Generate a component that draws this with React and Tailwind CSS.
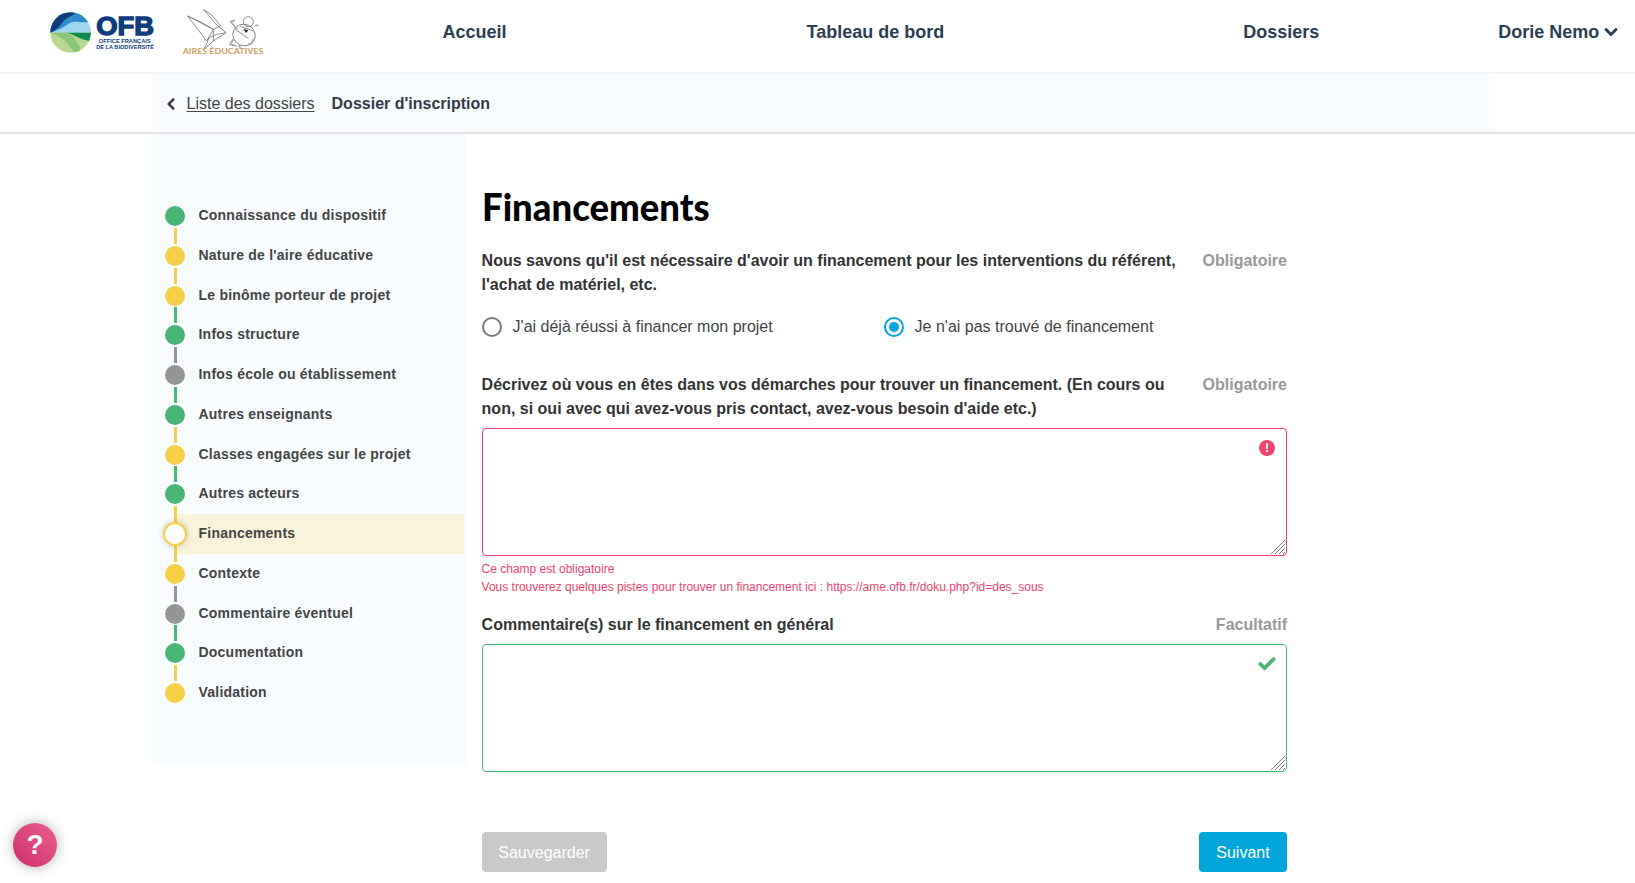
import { ChevronDown, ChevronLeft, Check } from 'lucide-react';

const GREEN = '#4bb575';
const YELLOW = '#f5cf44';
const GREY = '#959595';

const STEPS = [
  { label: 'Connaissance du dispositif', color: GREEN },
  { label: "Nature de l'aire éducative", color: YELLOW },
  { label: 'Le binôme porteur de projet', color: YELLOW },
  { label: 'Infos structure', color: GREEN },
  { label: 'Infos école ou établissement', color: GREY },
  { label: 'Autres enseignants', color: GREEN },
  { label: 'Classes engagées sur le projet', color: YELLOW },
  { label: 'Autres acteurs', color: GREEN },
  { label: 'Financements', color: YELLOW, current: true },
  { label: 'Contexte', color: YELLOW },
  { label: 'Commentaire éventuel', color: GREY },
  { label: 'Documentation', color: GREEN },
  { label: 'Validation', color: YELLOW },
];

function OfbLogo() {
  return (
    <svg viewBox="140 20 340 140" className="w-[113px] h-[47px] shrink-0 -mt-[3px]">
      <defs>
        <clipPath id="ofb-disc">
          <circle cx="211" cy="96" r="61" />
        </clipPath>
      </defs>
      <g clipPath="url(#ofb-disc)">
        <rect x="150" y="35" width="122" height="122" fill="#b9d88f" />
        <rect x="150" y="35" width="122" height="62" fill="#9fd5ee" />
        <path d="M150 97 V35 H272 V62 C240 72 225 55 205 70 C190 82 170 90 150 97Z" fill="#2b8ecb" />
        <path d="M150 97 V35 H228 C215 50 205 45 190 62 C178 78 165 90 150 97Z" fill="#113c7c" />
        <path d="M272 97 H195 C225 100 232 118 272 122Z" fill="#0c8a4b" />
        <path d="M150 97 H195 C225 102 225 125 240 140 L240 157 H225 C205 140 200 112 150 97Z" fill="#8cc47a" />
      </g>
      <text x="288" y="105" fontSize="76" fontWeight="900" fill="#113c7c" textLength="174" lengthAdjust="spacingAndGlyphs" style={{ fontFamily: '"Liberation Sans", sans-serif', stroke: '#113c7c', strokeWidth: 4 }}>OFB</text>
      <text x="296" y="127" fontSize="16" fontWeight="700" fill="#113c7c" textLength="156" lengthAdjust="spacingAndGlyphs" style={{ fontFamily: '"Liberation Sans", sans-serif' }}>OFFICE FRANÇAIS</text>
      <text x="288" y="145" fontSize="16" fontWeight="700" fill="#113c7c" textLength="174" lengthAdjust="spacingAndGlyphs" style={{ fontFamily: '"Liberation Sans", sans-serif' }}>DE LA BIODIVERSITÉ</text>
    </svg>
  );
}

function AiresLogo() {
  return (
    <svg viewBox="540 0 270 180" className="w-[90px] h-[60px] shrink-0 ml-[20px] -mt-[3px]">
      <g fill="none" stroke="#777777" strokeWidth="2.5" strokeLinejoin="round">
        <path d="M563 45 L620 120 L640 85 Z" />
        <path d="M563 45 L600 62 L640 85" />
        <path d="M610 25 L650 72 L678 95 L640 120 L612 145 L628 110" />
        <path d="M610 25 L635 42 L662 75" />
        <path d="M640 85 L662 75 M640 85 L640 120 M650 100 L678 95 M628 110 L650 100" />
        <ellipse cx="732" cy="102" rx="34" ry="32" transform="rotate(25 732 102)" />
        <path d="M706 85 L745 112 M720 76 L760 90" />
        <circle cx="745" cy="62" r="15" />
        <path d="M712 85 L692 62 L705 58 M765 75 L775 72 M700 115 L690 130 L710 135 M745 130 L755 128 L760 115 M715 133 L722 140" strokeWidth="5" stroke="#aaaaaa" />
      </g>
      <path d="M730 84 L745 88 L738 96 Z" fill="#222222" />
      <text x="548" y="158" fontSize="25" fontWeight="700" fill="#c9a05f" textLength="242" lengthAdjust="spacingAndGlyphs" style={{ fontFamily: 'Lato, sans-serif' }}>AIRES ÉDUCATIVES</text>
    </svg>
  );
}

function ResizeHatch() {
  return (
    <svg viewBox="0 0 14 14" className="absolute right-[2px] bottom-[2px] w-[14px] h-[14px] pointer-events-none">
      <path d="M0 14 L14 0 M4 14 L14 4 M8 14 L14 8 M12 14 L14 12" stroke="#808080" strokeWidth="1" fill="none" />
    </svg>
  );
}

function Step({ step, first }) {
  return (
    <li className="relative flex items-center h-[39.75px]">
      {!first && (
        <span
          className="absolute left-[8.5px] top-[-8px] h-4 w-[3px]"
          style={{ backgroundColor: step.color }}
        />
      )}
      {step.current ? (
        <span className="relative z-10 -ml-0.5 mr-[-2px] w-6 h-6 shrink-0 rounded-full bg-white border-2 border-[#f5cf44] shadow-[0_0_6px_rgba(0,0,0,0.2)]" />
      ) : (
        <span
          className="relative z-10 w-5 h-5 shrink-0 rounded-full"
          style={{ backgroundColor: step.color }}
        />
      )}
      <span className={`flex-1 h-full -ml-[9px] pl-[22.5px] flex items-center pb-0.5 text-sm font-bold tracking-[0.22px] text-[#444444] ${step.current ? 'bg-[#f8f3da]' : ''}`}>
        {step.label}
      </span>
    </li>
  );
}

function FieldLabel({ children, hint }) {
  return (
    <div className="flex justify-between items-start text-base leading-6 font-bold">
      <p className="w-[700px] text-[#333333]">{children}</p>
      <span className="text-[#999999]">{hint}</span>
    </div>
  );
}

function Radio({ label, checked, className }) {
  return (
    <label className={`flex items-center gap-[11px] ${className}`}>
      {checked ? (
        <span className="w-5 h-5 rounded-full border-2 border-[#00a5db] flex items-center justify-center">
          <span className="w-2.5 h-2.5 rounded-full bg-[#00a5db]" />
        </span>
      ) : (
        <span className="w-5 h-5 rounded-full border-2 border-[#7a7a7a]" />
      )}
      <span className="text-base text-[#444444]">{label}</span>
    </label>
  );
}

export default function App() {
  return (
    <div className="relative h-[883px] overflow-hidden bg-white font-['Liberation_Sans',sans-serif]">
      <header className="h-[74px] flex items-center border-b-2 border-[#f3f3f3] pl-[47px] pb-[8px] text-lg font-bold text-[#2c3e50]">
        <OfbLogo />
        <AiresLogo />
        <a className="ml-[172.5px]">Accueil</a>
        <a className="ml-[300px]">Tableau de bord</a>
        <a className="ml-[299px]">Dossiers</a>
        <span className="ml-[179px] flex items-center gap-[2px]">
          Dorie Nemo
          <ChevronDown className="w-5 h-5" strokeWidth={3.5} />
        </span>
      </header>

      <div className="border-b-2 border-[#e2e2e2]">
        <nav className="ml-[152px] w-[1343px] h-[58px] bg-[#f8fcff] flex items-center pl-[10px] pt-[2px] text-base text-[#444444]">
          <ChevronLeft className="w-[18px] h-[18px]" strokeWidth={3.5} />
          <a className="ml-[6.5px] underline underline-offset-2">Liste des dossiers</a>
          <strong className="ml-[17px] text-[#333a45]">Dossier d'inscription</strong>
        </nav>
      </div>

      <div className="flex ml-[151px]">
        <aside className="w-[315px] h-[632px] bg-[#f8fcff] pt-[62.2px] pl-[14px] pr-[2px] shrink-0">
          <ol>
            {STEPS.map((step, idx) => (
              <Step key={step.label} step={step} first={idx === 0} />
            ))}
          </ol>
        </aside>

        <main className="ml-[15.6px] w-[805.4px] pt-[49px]">
          <h1 className="font-['Lato',sans-serif] font-black text-[38px] leading-[46px] text-black mb-[20px] origin-left scale-x-[0.96]">Financements</h1>

          <FieldLabel hint="Obligatoire">
            Nous savons qu'il est nécessaire d'avoir un financement pour les interventions du référent, l'achat de matériel, etc.
          </FieldLabel>
          <div className="flex mt-[18px] h-6 items-center">
            <Radio label="J'ai déjà réussi à financer mon projet" className="w-[402px]" />
            <Radio label="Je n'ai pas trouvé de financement" checked />
          </div>

          <div className="mt-[34px]">
            <FieldLabel hint="Obligatoire">
              Décrivez où vous en êtes dans vos démarches pour trouver un financement. (En cours ou non, si oui avec qui avez-vous pris contact, avez-vous besoin d'aide etc.)
            </FieldLabel>
          </div>
          <div className="relative mt-[7px]">
            <textarea className="block w-full h-32 border-[1.5px] border-[#f0436e] rounded outline-none resize-none" />
            <span className="absolute top-[12px] right-[12px] w-4 h-4 rounded-full bg-[#f0436e] text-white text-xs font-bold leading-4 text-center">!</span>
            <ResizeHatch />
          </div>
          <p className="mt-1 text-xs leading-[18px] text-[#f0436e]">
            Ce champ est obligatoire
            <br />
            Vous trouverez quelques pistes pour trouver un financement ici : https://ame.ofb.fr/doku.php?id=des_sous
          </p>

          <div className="mt-[17px]">
            <FieldLabel hint="Facultatif">Commentaire(s) sur le financement en général</FieldLabel>
          </div>
          <div className="relative mt-[7px]">
            <textarea className="block w-full h-32 border-[1.5px] border-[#4bb575] rounded outline-none resize-none" />
            <Check className="absolute top-[10px] right-[10px] w-5 h-5 text-[#4bb575]" strokeWidth={4.5} />
            <ResizeHatch />
          </div>

          <div className="flex justify-between mt-[60px]">
            <button className="w-[125px] h-10 pt-px rounded bg-[#c8c8c8] text-white text-base">Sauvegarder</button>
            <button className="w-[88px] h-10 pt-px rounded bg-[#00a5db] text-white text-base">Suivant</button>
          </div>
        </main>
      </div>

      <button className="absolute left-[13px] top-[823px] w-11 h-11 rounded-full bg-gradient-to-tr from-[#c92c68] to-[#ee5f92] text-white text-[28px] font-black shadow-[0_0_14px_rgba(0,0,0,0.3)]">?</button>
    </div>
  );
}
